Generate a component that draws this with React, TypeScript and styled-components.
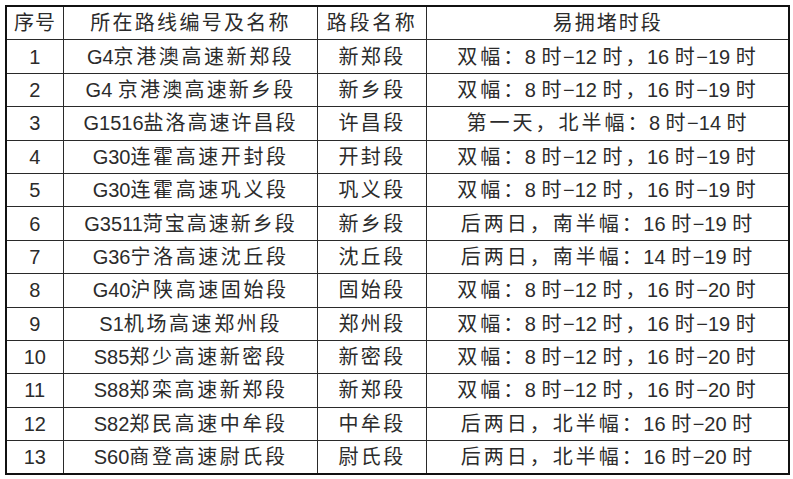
import React from "react";
import styled, { createGlobalStyle } from "styled-components";

type Row = {
  no: string;
  road: string;
  roadGap?: number;
  section: string;
  time: string;
};

const rows: Row[] = [
  { no: "1", road: "G4京港澳高速新郑段", section: "新郑段", time: "双幅：8 时−12 时，16 时−19 时" },
  { no: "2", road: "G4 京港澳高速新乡段", roadGap: 2.2, section: "新乡段", time: "双幅：8 时−12 时，16 时−19 时" },
  { no: "3", road: "G1516盐洛高速许昌段", roadGap: 2, section: "许昌段", time: "第一天，北半幅：8 时−14 时" },
  { no: "4", road: "G30连霍高速开封段", section: "开封段", time: "双幅：8 时−12 时，16 时−19 时" },
  { no: "5", road: "G30连霍高速巩义段", section: "巩义段", time: "双幅：8 时−12 时，16 时−19 时" },
  { no: "6", road: "G3511菏宝高速新乡段", roadGap: 2, section: "新乡段", time: "后两日，南半幅：16 时−19 时" },
  { no: "7", road: "G36宁洛高速沈丘段", section: "沈丘段", time: "后两日，南半幅：14 时−19 时" },
  { no: "8", road: "G40沪陕高速固始段", section: "固始段", time: "双幅：8 时−12 时，16 时−20 时" },
  { no: "9", road: "S1机场高速郑州段", section: "郑州段", time: "双幅：8 时−12 时，16 时−19 时" },
  { no: "10", road: "S85郑少高速新密段", section: "新密段", time: "双幅：8 时−12 时，16 时−20 时" },
  { no: "11", road: "S88郑栾高速新郑段", section: "新郑段", time: "双幅：8 时−12 时，16 时−20 时" },
  { no: "12", road: "S82郑民高速中牟段", section: "中牟段", time: "后两日，北半幅：16 时−20 时" },
  { no: "13", road: "S60商登高速尉氏段", section: "尉氏段", time: "后两日，北半幅：16 时−20 时" },
];

const GlobalStyle = createGlobalStyle`
  html, body {
    margin: 0;
    padding: 0;
    background: #fff;
  }
  body {
    font-family: "Liberation Sans", "Noto Sans CJK SC", sans-serif;
    color: #2b2b2b;
  }
`;

const Page = styled.div`
  padding: 5px 0 0 5px;
`;

const Table = styled.table`
  border-collapse: collapse;
  width: 783px;
  table-layout: fixed;
  border: 2px solid #111;
`;

const Cell = styled.td`
  height: 32.4px;
  padding: 0;
  border: 1px solid #2a2a2a;
  text-align: center;
  vertical-align: middle;
  font-size: 20px;
  line-height: 20px;
  white-space: nowrap;
  font-weight: 400;
`;

const HeadCell = styled(Cell).attrs({ as: "th" })`
  font-weight: 400;
`;

// CJK runs get their own spacing, digits and latin stay tight
const Han = styled.span<{ $gap: number }>`
  letter-spacing: ${(p) => p.$gap}px;
  margin-right: ${(p) => -p.$gap / 2}px;
`;

const Spaced: React.FC<{ text: string; gap: number }> = ({ text, gap }) => {
  const parts = text.split(/([\u3000-\u9fff\uff00-\uffef]+)/).filter(Boolean);
  return (
    <>
      {parts.map((p, i) =>
        /[\u3000-\u9fff\uff00-\uffef]/.test(p) ? (
          <Han key={i} $gap={gap}>
            {p}
          </Han>
        ) : (
          <React.Fragment key={i}>{p}</React.Fragment>
        )
      )}
    </>
  );
};

export default function App() {
  return (
    <Page>
      <GlobalStyle />
      <Table>
        <colgroup>
          <col style={{ width: 57 }} />
          <col style={{ width: 254 }} />
          <col style={{ width: 109 }} />
          <col style={{ width: 363 }} />
        </colgroup>
        <thead>
          <tr>
            <HeadCell>
              <Spaced text="序号" gap={1} />
            </HeadCell>
            <HeadCell>
              <Spaced text="所在路线编号及名称" gap={2.3} />
            </HeadCell>
            <HeadCell>
              <Spaced text="路段名称" gap={2.7} />
            </HeadCell>
            <HeadCell>
              <Spaced text="易拥堵时段" gap={2} />
            </HeadCell>
          </tr>
        </thead>
        <tbody>
          {rows.map((r) => (
            <tr key={r.no}>
              <Cell>{r.no}</Cell>
              <Cell>
                <Spaced text={r.road} gap={r.roadGap ?? 2.6} />
              </Cell>
              <Cell>
                <Spaced text={r.section} gap={2.5} />
              </Cell>
              <Cell>
                <Spaced text={r.time} gap={3} />
              </Cell>
            </tr>
          ))}
        </tbody>
      </Table>
    </Page>
  );
}
